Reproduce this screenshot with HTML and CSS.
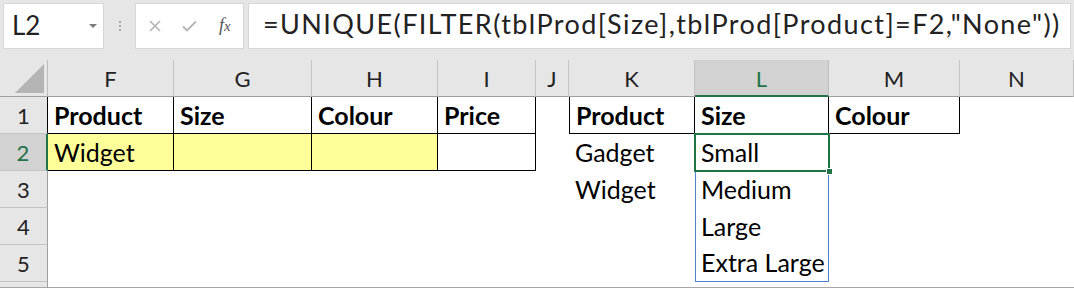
FILE: index.html
```html
<!DOCTYPE html>
<html>
<head>
<meta charset="utf-8">
<link rel="stylesheet" href="styles.css">
</head>
<body>
<div class="top">
  <div class="toolbar">
    <div class="namebox"><span class="nb-text">L2</span><span class="nb-arrow"></span></div>
    <div class="grip"><i></i><i></i><i></i></div>
    <div class="fxbox">
      <svg class="ico" width="12" height="12" viewBox="0 0 12 12"><path d="M1 1 L11 11 M11 1 L1 11" stroke="#b4b4b4" stroke-width="1.6" fill="none"/></svg>
      <svg class="ico" width="15" height="12" viewBox="0 0 15 12"><path d="M1 6.5 L5 10.5 L14 1.5" stroke="#b4b4b4" stroke-width="1.8" fill="none"/></svg>
      <span class="fx">f<span class="fx-x">x</span></span>
    </div>
    <div class="formula">=UNIQUE(FILTER(tblProd[Size],tblProd[Product]=F2,"None"))</div>
  </div>
</div>
<div class="sheet">
  <!-- header row -->
  <div class="corner"><span class="tri"></span></div>
  <div class="h">F</div><div class="h">G</div><div class="h">H</div><div class="h">I</div><div class="h">J</div><div class="h">K</div><div class="h hsel">L</div><div class="h">M</div><div class="h">N</div>
  <!-- row 1 -->
  <div class="r rdark">1</div>
  <div class="c b br bb">Product</div>
  <div class="c b br bb">Size</div>
  <div class="c b br bb">Colour</div>
  <div class="c b br bb">Price</div>
  <div class="c"></div>
  <div class="c b bl br bb">Product</div>
  <div class="c b br bb">Size</div>
  <div class="c b br bb">Colour</div>
  <div class="c"></div>
  <!-- row 2 -->
  <div class="r rsel">2</div>
  <div class="c y br bb">Widget</div>
  <div class="c y br bb"></div>
  <div class="c y br bb"></div>
  <div class="c br bb"></div>
  <div class="c"></div>
  <div class="c">Gadget</div>
  <div class="c active">Small<span class="handle"></span></div>
  <div class="c"></div>
  <div class="c"></div>
  <!-- row 3 -->
  <div class="r">3</div>
  <div class="c"></div><div class="c"></div><div class="c"></div><div class="c"></div><div class="c"></div>
  <div class="c">Widget</div>
  <div class="c spill">Medium</div>
  <div class="c"></div><div class="c"></div>
  <!-- row 4 -->
  <div class="r">4</div>
  <div class="c"></div><div class="c"></div><div class="c"></div><div class="c"></div><div class="c"></div>
  <div class="c"></div>
  <div class="c spill">Large</div>
  <div class="c"></div><div class="c"></div>
  <!-- row 5 -->
  <div class="r">5</div>
  <div class="c"></div><div class="c"></div><div class="c"></div><div class="c"></div><div class="c"></div>
  <div class="c"></div>
  <div class="c spill spill-end">Extra Large</div>
  <div class="c"></div><div class="c"></div>
  <!-- row 6 (partial) -->
  <div class="r r6"></div>
  <div class="c"></div><div class="c"></div><div class="c"></div><div class="c"></div><div class="c"></div>
  <div class="c"></div><div class="c"></div><div class="c"></div><div class="c"></div>
</div>
</body>
</html>
```
FILE: styles.css
```css
* { box-sizing: border-box; }
html, body { margin: 0; padding: 0; }
body {
  width: 1074px;
  height: 288px;
  overflow: hidden;
  background: #ffffff;
  font-family: Lato, "Open Sans", sans-serif;
  color: #000;
}
.top {
  background: #e6e6e6;
  padding: 3px 3px 11px 3px;
  height: 60px;
}
.toolbar {
  display: flex;
  height: 46px;
}
.namebox {
  width: 101px;
  background: #fff;
  border: 1px solid #d6d6d6;
  display: flex;
  align-items: center;
  justify-content: space-between;
  padding: 0 6px 2px 8px;
}
.nb-text {
  font-size: 26px;
  color: #222;
}
.nb-arrow {
  width: 0; height: 0;
  border-left: 4px solid transparent;
  border-right: 4px solid transparent;
  border-top: 4px solid #7a7a7a;
  margin-top: 2px;
}
.grip {
  width: 31px;
  display: flex;
  flex-direction: column;
  align-items: center;
  justify-content: center;
  gap: 2px;
}
.grip i {
  display: block;
  width: 2px;
  height: 2px;
  background: #a9a9a9;
}
.fxbox {
  width: 109px;
  background: #fff;
  border: 1px solid #d6d6d6;
  display: flex;
  align-items: center;
  padding-left: 13px;
  gap: 21px;
}
.ico { display: block; }
.fx {
  font-family: "Liberation Serif", serif;
  font-style: italic;
  font-size: 18px;
  color: #555;
  margin-left: 1px;
  margin-top: -2px;
}
.fx-x { font-size: 15px; }
.formula {
  flex: 1;
  margin-left: 4px;
  background: #fff;
  border: 1px solid #d6d6d6;
  font-size: 27px;
  letter-spacing: 1.4px;
  color: #222;
  line-height: 40px;
  padding: 0 0 4px 14px;
  white-space: nowrap;
  overflow: hidden;
}

.sheet {
  display: grid;
  grid-template-columns: 48px 126px 138px 126px 98px 33px 126px 134px 131px 1fr;
  grid-template-rows: 37px repeat(5, 37px) 5px;
  border-bottom: 1px solid #a6a6a6;
}
.corner {
  background: #e6e6e6;
  border-right: 1px solid #bdbdbd;
  border-bottom: 1px solid #9e9e9e;
  position: relative;
}
.tri {
  position: absolute;
  right: 3px;
  bottom: 3px;
  width: 0; height: 0;
  border-left: 29px solid transparent;
  border-bottom: 29px solid #b4b4b4;
}
.h {
  background: #e6e6e6;
  border-right: 1px solid #c3c3c3;
  border-bottom: 1px solid #9e9e9e;
  font-size: 22px;
  color: #222;
  text-align: center;
  line-height: 36px;
  padding-top: 1px;
}
.hsel {
  background: #d2d2d2;
  color: #217346;
  border-bottom: 2px solid #217346;
  border-right-color: #bdbdbd;
}
.r {
  background: #e6e6e6;
  border-right: 1px solid #9e9e9e;
  border-bottom: 1px solid #c3c3c3;
  font-size: 22px;
  color: #222;
  text-align: center;
  line-height: 36px;
  padding-top: 1px;
}
.rdark { border-right-color: #000; }
.rsel {
  background: #d2d2d2;
  color: #217346;
  border-right: 2px solid #217346;
}
.r6 { border-bottom: none; }

.c {
  font-size: 25px;
  line-height: 36px;
  padding: 0 0 0 6px;
  white-space: nowrap;
  background: #fff;
}
.b { font-weight: 700; }
.y { background: #ffff99; }
.br { border-right: 1px solid #000; }
.bb { border-bottom: 1px solid #000; }
.bl { border-left: 1px solid #000; }

.active {
  position: relative;
  outline: 2px solid #217346;
  outline-offset: -1px;
}
.handle {
  position: absolute;
  right: -4px;
  bottom: -4px;
  width: 7px;
  height: 7px;
  background: #217346;
  border: 1px solid #fff;
}
.spill {
  border-left: 1px solid #4f81d5;
  border-right: 1px solid #4f81d5;
  padding-left: 5px;
}
.spill-end {
  border-bottom: 1px solid #4f81d5;
  line-height: 35px;
}
```
